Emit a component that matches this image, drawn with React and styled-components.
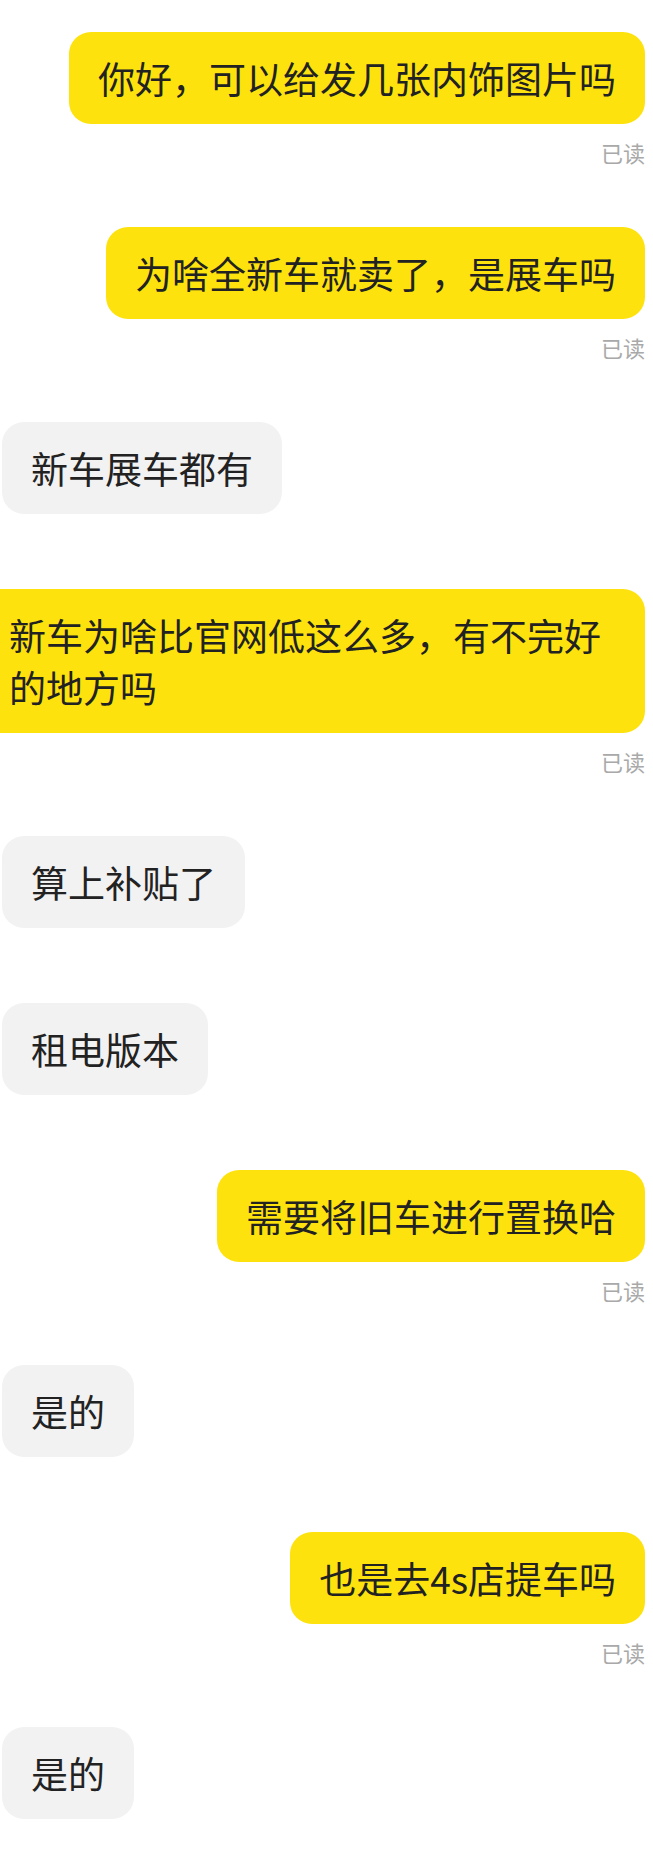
import styled, { createGlobalStyle } from "styled-components";

const GlobalStyle = createGlobalStyle`
  html, body {
    margin: 0;
    padding: 0;
    background: #ffffff;
  }
  body {
    font-family: "Noto Sans CJK SC", "Noto Sans", sans-serif;
  }
`;

const ChatList = styled.div`
  display: flex;
  flex-direction: column;
  width: 653px;
  min-height: 1858px;
  box-sizing: border-box;
  padding: 32px 8px 0 2px;
  overflow: hidden;
`;

const MessageGroup = styled.div`
  display: flex;
  flex-direction: column;
  align-items: ${({ $mine }) => ($mine ? "flex-end" : "flex-start")};
  margin-bottom: ${({ $mine }) => ($mine ? "65px" : "75px")};
`;

const Bubble = styled.div`
  box-sizing: border-box;
  padding: 20px 29px;
  border-radius: 22px;
  font-size: 37px;
  line-height: 52px;
  color: #222222;
  background: ${({ $mine }) => ($mine ? "#fde20e" : "#f2f2f2")};
  margin-left: ${({ $bleed }) => ($bleed ? "-22px" : "0")};
  ${({ $bleed }) => $bleed && "border-top-left-radius: 0; border-bottom-left-radius: 0;"}
`;

const ReadMark = styled.div`
  margin-top: 18px;
  font-size: 22px;
  line-height: 20px;
  color: #a9a9a9;
`;

const messages = [
  { mine: true, text: "你好，可以给发几张内饰图片吗" },
  { mine: true, text: "为啥全新车就卖了，是展车吗" },
  { mine: false, text: "新车展车都有" },
  { mine: true, text: "新车为啥比官网低这么多，有不完好的地方吗", bleed: true },
  { mine: false, text: "算上补贴了" },
  { mine: false, text: "租电版本" },
  { mine: true, text: "需要将旧车进行置换哈" },
  { mine: false, text: "是的" },
  { mine: true, text: "也是去4s店提车吗" },
  { mine: false, text: "是的" },
];

const App = () => {
  return (
    <>
      <GlobalStyle />
      <ChatList>
        {messages.map((m, i) => (
          <MessageGroup key={i} $mine={m.mine}>
            <Bubble $mine={m.mine} $bleed={m.bleed}>{m.text}</Bubble>
            {m.mine && <ReadMark>已读</ReadMark>}
          </MessageGroup>
        ))}
      </ChatList>
    </>
  );
};

export default App;
